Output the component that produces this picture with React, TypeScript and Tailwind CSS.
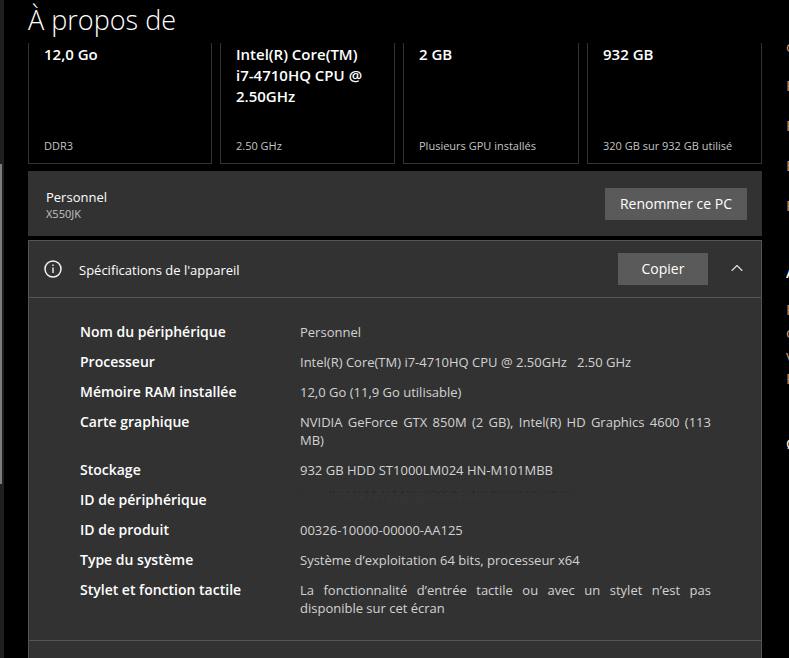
import { ChevronUp } from "lucide-react"

const cards = [
  { title: "12,0 Go", detail: "DDR3" },
  { title: "Intel(R) Core(TM) i7-4710HQ CPU @ 2.50GHz", detail: "2.50 GHz" },
  { title: "2 GB", detail: "Plusieurs GPU installés" },
  { title: "932 GB", detail: "320 GB sur 932 GB utilisé" },
]

const specs = [
  { label: "Nom du périphérique", value: "Personnel" },
  { label: "Processeur", value: "Intel(R) Core(TM) i7-4710HQ CPU @ 2.50GHz\u00a0\u00a0 2.50 GHz" },
  { label: "Mémoire RAM installée", value: "12,0 Go (11,9 Go utilisable)" },
  {
    label: "Carte graphique",
    value: "NVIDIA GeForce GTX 850M (2 GB), Intel(R) HD Graphics 4600 (113 MB)",
  },
  { label: "Stockage", value: "932 GB HDD ST1000LM024 HN-M101MBB" },
  { label: "ID de périphérique", value: null },
  { label: "ID de produit", value: "00326-10000-00000-AA125" },
  { label: "Type du système", value: "Système d’exploitation 64 bits, processeur x64" },
  {
    label: "Stylet et fonction tactile",
    value: "La fonctionnalité d’entrée tactile ou avec un stylet n’est pas disponible sur cet écran",
  },
]

function InfoIcon() {
  return (
    <svg className="mb-px size-[18px] shrink-0" viewBox="0 0 18 18" fill="none" stroke="#f2f2f2">
      <circle cx="9" cy="9" r="8" strokeWidth="1.5" />
      <path d="M9 7.5v5.5" strokeWidth="1.4" />
      <path d="M9 4.6v1.5" strokeWidth="1.4" />
    </svg>
  )
}

// Erased identifier: only faint traces are left
function ErasedValue() {
  return (
    <svg className="h-[18px] w-[276px] max-w-full" viewBox="0 0 276 18" fill="none">
      <path d="M0 1h5" stroke="#2a2a2a" strokeDasharray="1 2" />
      <path d="M27 0.5H274" stroke="#262626" strokeDasharray="1 5 2 7 1 4" />
      <path d="M29 1.5H272" stroke="#292929" strokeDasharray="2 5 1 3 1 6" />
      <path d="M28 2.5H190" stroke="#3b3b3b" strokeDasharray="1 6 2 5" />
      <path d="M42 6.5H182" stroke="#373737" strokeDasharray="3 2 5 3" />
      <path d="M60 8.5H178" stroke="#373737" strokeDasharray="5 3 2 4" />
      <path d="M86 11.5H130" stroke="#353535" strokeDasharray="4 3" />
    </svg>
  )
}

function Scrollbar() {
  return (
    <div className="w-1 shrink-0 bg-[#202020] pt-[164px]">
      <div className="h-80 w-[2px] bg-[#7d7d7d]" />
    </div>
  )
}

// Related settings, mostly cut off by the window edge
function RelatedLinks() {
  return (
    <aside className="w-[3px] shrink-0 overflow-hidden pt-[43px] text-[15px] text-[#c29a7c]">
      <a href="#" className="flex h-[22px] items-start overflow-hidden leading-[6px]">c</a>
      <a href="#" className="block leading-10">P</a>
      <a href="#" className="block leading-10">P</a>
      <a href="#" className="block leading-10">B</a>
      <a href="#" className="block leading-10">R</a>
      <h2 className="mt-[37px] leading-5 font-semibold text-white">A</h2>
      <p className="mt-4 leading-[23px]">
        <a href="#" className="block">P</a>
        <a href="#" className="block">c</a>
        <a href="#" className="block">v</a>
        <a href="#" className="block">P</a>
      </p>
      <a href="#" className="mt-[43px] block leading-5 text-white">Ø</a>
    </aside>
  )
}

export default function App() {
  return (
    <div className="flex h-screen overflow-hidden bg-black font-['Open_Sans','Noto_Sans',sans-serif] text-white">
      <Scrollbar />
      <main className="ml-6 flex min-w-0 flex-1 flex-col">
        <h1 className="h-[43px] shrink-0 text-[27px] leading-10 font-light">À propos de</h1>

        <div className="grid shrink-0 grid-cols-[184fr_175fr_176fr_175fr] gap-2">
          {cards.map((card) => (
            <div
              key={card.title}
              className="flex h-[121px] flex-col justify-between border border-t-0 border-[#333] pt-px pb-[9px] pl-[15px]"
            >
              <h2 className="pr-5 text-[15px] leading-[21px] font-semibold">{card.title}</h2>
              <p className="text-[11px] leading-4 text-[#c4c4c4]">{card.detail}</p>
            </div>
          ))}
        </div>

        <section className="mt-[7px] flex h-[65px] shrink-0 items-center justify-between bg-[#323232] pr-[15px] pl-[18px]">
          <div className="pt-[3px]">
            <p className="text-[13px] leading-[18px]">Personnel</p>
            <p className="text-[11px] leading-4 text-[#c4c4c4]">X550JK</p>
          </div>
          <button type="button" className="h-8 bg-[#5a5a5a] px-[15px] text-[14px] leading-5">
            Renommer ce PC
          </button>
        </section>

        <section className="mt-1 flex-1 border border-b-0 border-[#555] bg-[#323232]">
          <div className="flex h-[57px] items-center border-b border-[#555] pr-[14px] pl-[15px]">
            <InfoIcon />
            <h2 className="ml-[17px] flex-1 pt-0.5 text-[13px] leading-5">Spécifications de l'appareil</h2>
            <button type="button" className="h-8 w-[90px] bg-[#5a5a5a] text-[14px] leading-5">
              Copier
            </button>
            <button type="button" aria-label="Réduire" className="mb-[3px] ml-[19px]">
              <ChevronUp className="size-5" strokeWidth={1.4} color="#dcdcdc" />
            </button>
          </div>
          <dl className="grid grid-cols-[220px_1fr] gap-y-3 border-b border-[#555] pt-[25px] pr-[50px] pb-[23px] pl-[51px]">
            {specs.map((spec) => (
              <div key={spec.label} className="contents">
                <dt className="text-[14px] leading-[18px] font-semibold">{spec.label}</dt>
                <dd className="text-justify text-[13px] leading-[18px] text-[#d2d2d2]">
                  {spec.value ?? <ErasedValue />}
                </dd>
              </div>
            ))}
          </dl>
        </section>
      </main>
      <div className="w-6 shrink-0" />
      <RelatedLinks />
    </div>
  )
}
